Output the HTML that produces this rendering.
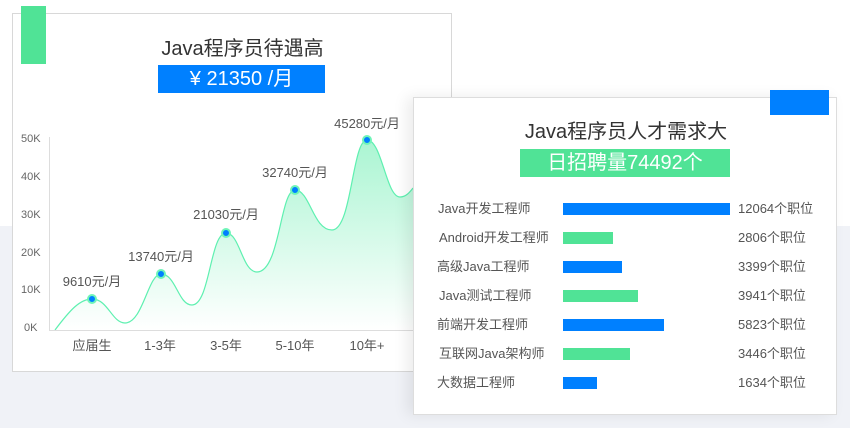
<!DOCTYPE html>
<html><head><meta charset="utf-8"><style>
*{margin:0;padding:0;box-sizing:border-box}
body{width:850px;height:428px;overflow:hidden;position:relative;font-family:"Liberation Sans","Noto Sans CJK SC",sans-serif;background:#fff}
.bg{position:absolute;left:0;top:226px;width:850px;height:202px;background:#f0f2f7}
.card1{position:absolute;left:12px;top:13px;width:440px;height:359px;background:#fff;border:1px solid #d8d8d8}
.card2{position:absolute;left:413px;top:97px;width:424px;height:318px;background:#fff;border:1px solid #ddd;box-shadow:-6px 0 14px rgba(0,0,0,0.08)}
.t{position:absolute;color:#333;white-space:nowrap;line-height:24px}
.lab{position:absolute;font-size:13px;color:#555;white-space:nowrap;line-height:15px}
.bar{position:absolute;left:149px;height:12px}
.b{background:#0080ff}.g{background:#50e396}
.v{position:absolute;left:324px;font-size:13px;color:#555;line-height:15px}
</style></head><body>
<div class="bg"></div>
<div class="card1"></div>
<div style="position:absolute;left:21px;top:6px;width:25px;height:58px;background:#50e396"></div>
<div class="t" style="left:160px;top:37px;font-size:20px;width:165px;text-align:center;">Java程序员待遇高</div>
<div style="position:absolute;left:158px;top:65px;width:167px;height:28px;background:#0080ff;color:#fff;font-size:20px;text-align:center;line-height:28px">¥ 21350 /月</div>
<svg style="position:absolute;left:0;top:0" width="413" height="372">
<defs><linearGradient id="gr" x1="0" y1="0" x2="0" y2="1"><stop offset="0" stop-color="#aaf5d2"/><stop offset="1" stop-color="#ffffff"/></linearGradient></defs>
<path d="M55,330 C70,310 80,299 92,299 C108,299 112,323 125,323 C143,323 148,274 161,274 C176,274 178,305 192,305 C210,305 210,233 226,233 C240,233 242,272 257,272 C280,272 280,190 295,190 C310,190 313,230 332,230 C352,230 352,140 367,140 C382,140 386,197 400,197 C406,197 410,192 413,188 L413,330 Z" fill="url(#gr)"/>
<path d="M55,330 C70,310 80,299 92,299 C108,299 112,323 125,323 C143,323 148,274 161,274 C176,274 178,305 192,305 C210,305 210,233 226,233 C240,233 242,272 257,272 C280,272 280,190 295,190 C310,190 313,230 332,230 C352,230 352,140 367,140 C382,140 386,197 400,197 C406,197 410,192 413,188" fill="none" stroke="#5ef0b0" stroke-width="1.2"/>
<line x1="49.5" y1="137" x2="49.5" y2="330" stroke="#ddd"/>
<line x1="49" y1="330.5" x2="413" y2="330.5" stroke="#ddd"/>
<g fill="#0080ff" stroke="#6ff5b8" stroke-width="2"><circle cx="92" cy="299" r="4"/><circle cx="161" cy="274" r="4"/><circle cx="226" cy="233" r="4"/><circle cx="295" cy="190" r="4"/><circle cx="367" cy="140" r="4"/></g>
<g font-family="Liberation Sans" font-size="11" fill="#666"><text x="21" y="142">50K</text><text x="21" y="180">40K</text><text x="21" y="218">30K</text><text x="21" y="256">20K</text><text x="21" y="293">10K</text><text x="24" y="331">0K</text></g>
<g font-family="Liberation Sans,Noto Sans CJK SC" font-size="13" fill="#555" text-anchor="middle"><text x="92" y="286">9610元/月</text><text x="161" y="261">13740元/月</text><text x="226" y="219">21030元/月</text><text x="295" y="177">32740元/月</text><text x="367" y="128">45280元/月</text></g>
<g font-family="Liberation Sans,Noto Sans CJK SC" font-size="13" fill="#555" text-anchor="middle"><text x="92" y="350">应届生</text><text x="160" y="350">1-3年</text><text x="226" y="350">3-5年</text><text x="295" y="350">5-10年</text><text x="367" y="350">10年+</text></g>
</svg>
<div class="card2">
<div style="position:absolute;left:356px;top:-8px;width:59px;height:25px;background:#0080ff"></div>
<div class="t" style="left:0;width:424px;text-align:center;top:22px;font-size:20px">Java程序员人才需求大</div>
<div style="position:absolute;left:106px;top:51px;width:210px;height:28px;background:#50e396;color:#fff;font-size:20px;text-align:center;line-height:28px">日招聘量74492个</div>
<div class="lab" style="left:24px;top:103px">Java开发工程师</div><div class="bar b" style="top:105px;width:167px"></div><div class="v" style="top:103px">12064个职位</div>
<div class="lab" style="left:25px;top:132px">Android开发工程师</div><div class="bar g" style="top:134px;width:50px"></div><div class="v" style="top:132px">2806个职位</div>
<div class="lab" style="left:23px;top:161px">高级Java工程师</div><div class="bar b" style="top:163px;width:59px"></div><div class="v" style="top:161px">3399个职位</div>
<div class="lab" style="left:25px;top:190px">Java测试工程师</div><div class="bar g" style="top:192px;width:75px"></div><div class="v" style="top:190px">3941个职位</div>
<div class="lab" style="left:23px;top:219px">前端开发工程师</div><div class="bar b" style="top:221px;width:101px"></div><div class="v" style="top:219px">5823个职位</div>
<div class="lab" style="left:25px;top:248px">互联网Java架构师</div><div class="bar g" style="top:250px;width:67px"></div><div class="v" style="top:248px">3446个职位</div>
<div class="lab" style="left:23px;top:277px">大数据工程师</div><div class="bar b" style="top:279px;width:34px"></div><div class="v" style="top:277px">1634个职位</div>
</div>
</body></html>
